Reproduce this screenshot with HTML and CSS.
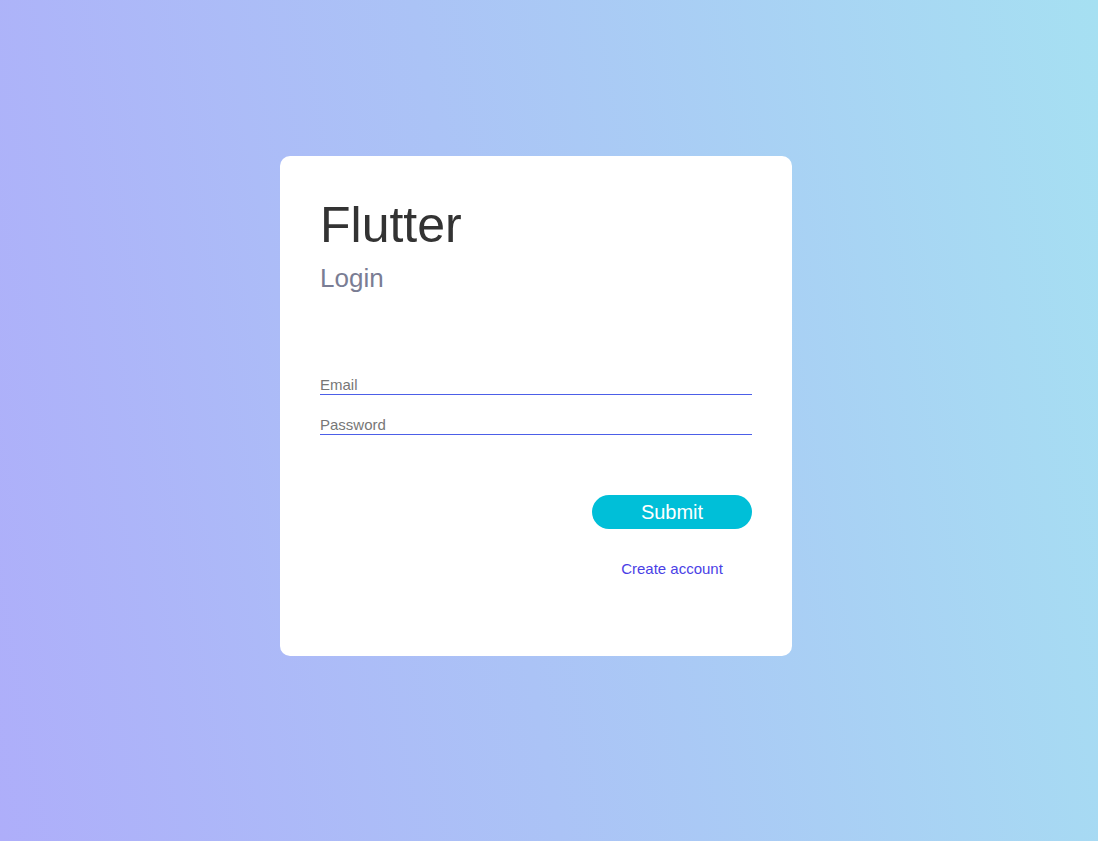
FILE: index.html
```html
<!DOCTYPE html>
<html lang="en">
<head>
<meta charset="utf-8">
<title>Flutter Login</title>
<link rel="stylesheet" href="styles.css">
</head>
<body>
<main class="page">
  <form class="card">
    <h1 class="title">Flutter</h1>
    <h2 class="subtitle">Login</h2>
    <div class="fields">
      <input class="field" type="email" placeholder="Email">
      <input class="field" type="password" placeholder="Password">
    </div>
    <div class="actions">
      <button class="submit" type="button">Submit</button>
      <a class="link" href="#">Create account</a>
    </div>
  </form>
</main>
</body>
</html>
```

FILE: styles.css
```css
html, body {
  margin: 0;
  padding: 0;
  height: 100%;
}
body {
  font-family: "Liberation Sans", Arial, sans-serif;
  background: linear-gradient(80deg, #aeaefa 0%, #abc3f6 45%, #a6e0f2 100%);
}
.page {
  box-sizing: border-box;
  min-height: 100vh;
  display: flex;
  align-items: center;
  justify-content: center;
  padding: 0 26px 29px 0;
}
.card {
  box-sizing: border-box;
  width: 512px;
  height: 500px;
  background: #fff;
  border-radius: 10px;
  padding: 40px;
  display: flex;
  flex-direction: column;
}
.title {
  margin: 0;
  font-size: 50px;
  font-weight: 400;
  color: #333;
  line-height: normal;
}
.subtitle {
  margin: 9px 0 0;
  font-size: 26px;
  font-weight: 400;
  color: #7a7d94;
  line-height: normal;
}
.fields {
  display: flex;
  flex-direction: column;
  gap: 21px;
  margin-top: 82px;
}
.field {
  box-sizing: content-box;
  font-family: "Liberation Sans", Arial, sans-serif;
  font-size: 15px;
  line-height: 17px;
  height: 17px;
  padding: 0 0 1px;
  margin: 0;
  border: 0;
  border-bottom: 1px solid #4c5ee8;
  outline: none;
  background: transparent;
  color: #333;
  width: 100%;
}
.field::placeholder {
  color: #777;
}
.actions {
  align-self: flex-end;
  display: flex;
  flex-direction: column;
  align-items: center;
  width: 160px;
  margin-top: 60px;
}
.submit {
  width: 160px;
  height: 34px;
  border: 0;
  border-radius: 17px;
  background: #00bfd8;
  color: #fff;
  font-family: "Liberation Sans", Arial, sans-serif;
  font-size: 20px;
  padding: 0;
  cursor: pointer;
}
.link {
  margin-top: 31px;
  font-size: 15px;
  line-height: normal;
  color: #4a3fe6;
  text-decoration: none;
}
```
